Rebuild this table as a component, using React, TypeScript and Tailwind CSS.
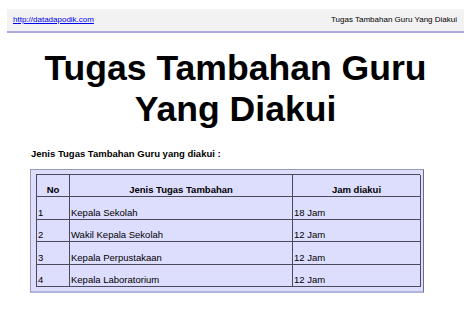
import React from "react";

const rows = [
  ["1", "Kepala Sekolah", "18 Jam"],
  ["2", "Wakil Kepala Sekolah", "12 Jam"],
  ["3", "Kepala Perpustakaan", "12 Jam"],
  ["4", "Kepala Laboratorium", "12 Jam"],
];

export default function App() {
  return (
    <div
      className="w-[471px] h-[311px] bg-white pt-[9px] px-[7px] text-black overflow-hidden"
      style={{ fontFamily: '"Liberation Sans", Arial, sans-serif' }}
    >
      <div className="h-[24px] bg-[#f2f2f2] border-b-2 border-[#aaaadc] flex items-center justify-between pl-[6px] pr-[7px] text-[8px] leading-none">
        <a href="#" className="text-[#0000ee] underline">
          http://datadapodik.com
        </a>
        <span>Tugas Tambahan Guru Yang Diakui</span>
      </div>

      <h1 className="mt-[15px] text-center font-bold text-[35.6px] leading-[41px]">
        Tugas Tambahan Guru
        <br />
        Yang Diakui
      </h1>

      <p className="mt-[18px] ml-[24px] font-bold text-[9.5px] leading-[12px]">
        Jenis Tugas Tambahan Guru yang diakui :
      </p>

      <div className="mt-[9px] ml-[23px] w-[394px] bg-[#ddddfe] border border-[#9a9ab2] border-r-[#6e6e80] border-b-2 border-b-[#b2b2de] pt-[4px] pl-[5px] pr-[3px] pb-[4px]">
        <div className="grid grid-cols-[33px_223px_128px] border-t border-l border-[#4a4a5a] text-[9.5px] leading-[11px]">
          {["No", "Jenis Tugas Tambahan", "Jam diakui"].map((h) => (
            <div
              key={h}
              className="h-[22px] border-r border-b border-[#4a4a5a] flex items-end justify-center pb-[1px] font-bold"
            >
              {h}
            </div>
          ))}
          {rows.map((r) =>
            r.map((c, i) => (
              <div
                key={r[0] + i}
                className="h-[22.5px] border-r border-b border-[#4a4a5a] flex items-end pl-[1px] pb-[1px]"
              >
                {c}
              </div>
            ))
          )}
        </div>
      </div>
    </div>
  );
}
